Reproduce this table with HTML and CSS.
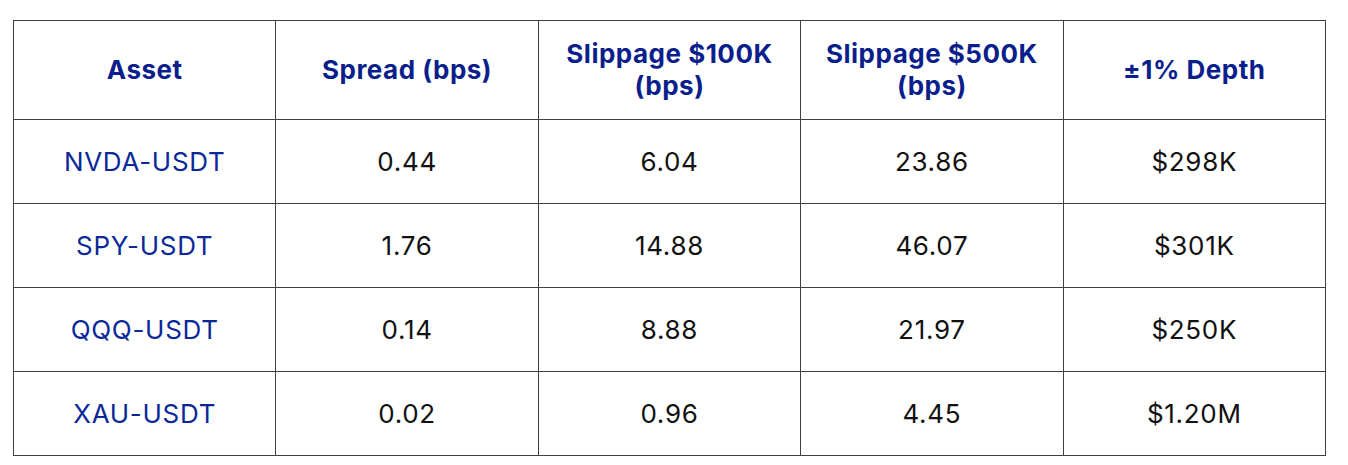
FILE: index.html
```html
<!DOCTYPE html>
<html lang="en">
<head>
<meta charset="utf-8">
<title>Liquidity</title>
<link rel="stylesheet" href="styles.css">
</head>
<body>
<table class="liq">
  <thead>
    <tr>
      <th>Asset</th>
      <th>Spread (bps)</th>
      <th>Slippage $100K<br>(bps)</th>
      <th>Slippage $500K<br>(bps)</th>
      <th>±1% Depth</th>
    </tr>
  </thead>
  <tbody>
    <tr><td class="asset">NVDA-USDT</td><td>0.44</td><td>6.04</td><td>23.86</td><td>$298K</td></tr>
    <tr><td class="asset">SPY-USDT</td><td>1.76</td><td>14.88</td><td>46.07</td><td>$301K</td></tr>
    <tr><td class="asset">QQQ-USDT</td><td>0.14</td><td>8.88</td><td>21.97</td><td>$250K</td></tr>
    <tr><td class="asset">XAU-USDT</td><td>0.02</td><td>0.96</td><td>4.45</td><td>$1.20M</td></tr>
  </tbody>
</table>
</body>
</html>
```
FILE: styles.css
```css
html, body {
  margin: 0;
  background: #ffffff;
}
body {
  padding: 20px 0 0 13px;
  font-family: Inter, "Liberation Sans", sans-serif;
}
.liq {
  border-collapse: collapse;
  table-layout: fixed;
  width: 1313px;
}
.liq th, .liq td {
  border: 1px solid #3f3f3f;
  text-align: center;
  vertical-align: middle;
  padding: 0;
  width: 20%;
}
.liq th {
  height: 98px;
  font-size: 26px;
  line-height: 32px;
  letter-spacing: 0.5px;
  font-weight: 700;
  color: #0b1f8c;
}
.liq td {
  height: 83px;
  font-size: 26px;
  line-height: 30px;
  letter-spacing: 0.7px;
  font-weight: 400;
  color: #111111;
}
.liq td.asset {
  color: #0a2898;
}
```
